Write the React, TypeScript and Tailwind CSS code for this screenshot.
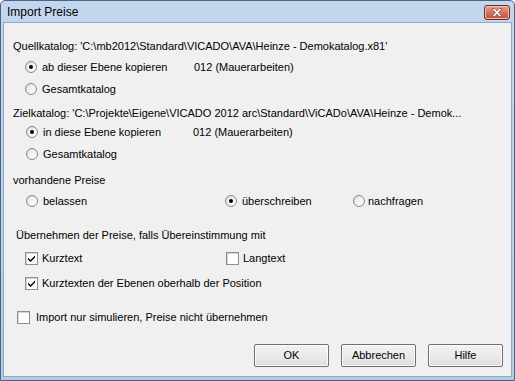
import React from "react";

const font = { fontFamily: '"Liberation Sans", Arial, sans-serif' };

function Radio({ checked }: { checked?: boolean }) {
  return (
    <span className="relative inline-flex h-[12px] w-[12px] shrink-0 items-center justify-center rounded-full border border-[#8a8a8a] bg-gradient-to-br from-[#d8d8d8] to-white">
      <span className="absolute inset-[1px] rounded-full bg-gradient-to-br from-[#e6e6e6] to-white" />
      {checked && <span className="relative h-[4px] w-[4px] rounded-full bg-black" />}
    </span>
  );
}

function Check({ checked }: { checked?: boolean }) {
  return (
    <span className="relative inline-flex h-[13px] w-[13px] shrink-0 items-center justify-center border border-[#8e8f8f] bg-white shadow-[inset_1px_1px_0_#d4d4d4]">
      {checked && (
        <svg width="9" height="9" viewBox="0 0 9 9" className="relative">
          <path d="M1 3.5 L3.5 6 L8 1.5 L8 3.5 L3.5 8 L1 5.5 Z" fill="#000" />
        </svg>
      )}
    </span>
  );
}

function Button({ children }: { children: React.ReactNode }) {
  return (
    <div className="flex h-[23px] w-[75px] items-center justify-center border border-[#707070] rounded-[2px] bg-gradient-to-b from-[#f2f2f2] via-[#ebebeb] to-[#dddddd] shadow-[inset_0_0_0_1px_#fcfcfc] text-[11px] text-black">
      {children}
    </div>
  );
}

export default function App() {
  return (
    <div className="h-[381px] w-[515px] overflow-hidden bg-white" style={font}>
      <div className="flex h-[381px] w-[515px] flex-col border border-[#4b6484] rounded-t-[5px] bg-gradient-to-b from-[#c2d7ee] to-[#b3cbe7]">
        {/* title bar */}
        <div className="flex h-[21px] shrink-0 items-center justify-between pl-[6px] pr-[4px]">
          <span className="text-[12px] text-black">Import Preise</span>
          <div className="mt-[1px] flex h-[15px] w-[26px] items-center justify-center rounded-[3px] border border-[#6b2a22] bg-gradient-to-b from-[#e8a596] via-[#d1735f] to-[#c0503a] shadow-[inset_0_0_0_1px_#f0c0b4]">
            <svg width="12" height="9" viewBox="0 0 12 9">
              <path d="M1 0.5 L4 0.5 L6 3 L8 0.5 L11 0.5 L7.5 4.5 L11 8.5 L8 8.5 L6 6 L4 8.5 L1 8.5 L4.5 4.5 Z" fill="#fff" stroke="#7a3327" strokeWidth="0.6" />
            </svg>
          </div>
        </div>
        {/* body */}
        <div className="mx-[2px] mb-[3px] flex flex-1 flex-col border border-[#8fa9c9] bg-[#f0f0f0] text-[11px] text-black">
          <div className="ml-[9px] mt-[14px] flex h-[18px] items-center">
            Quellkatalog: 'C:\mb2012\Standard\VICADO\AVA\Heinze - Demokatalog.x81'
          </div>
          <div className="ml-[21px] mt-[3px] flex h-[18px] items-center">
            <Radio checked />
            <span className="ml-[5px] w-[152px]">ab dieser Ebene kopieren</span>
            <span>012 (Mauerarbeiten)</span>
          </div>
          <div className="ml-[21px] mt-[4px] flex h-[18px] items-center">
            <Radio />
            <span className="ml-[5px]">Gesamtkatalog</span>
          </div>
          <div className="ml-[9px] mt-[6px] flex h-[18px] items-center whitespace-nowrap">
            Zielkatalog: 'C:\Projekte\Eigene\VICADO 2012 arc\Standard\ViCADo\AVA\Heinze - Demok...
          </div>
          <div className="ml-[22px] mt-[1px] flex h-[18px] items-center">
            <Radio checked />
            <span className="ml-[5px] w-[150px]">in diese Ebene kopieren</span>
            <span>012 (Mauerarbeiten)</span>
          </div>
          <div className="ml-[22px] mt-[4px] flex h-[18px] items-center">
            <Radio />
            <span className="ml-[5px]">Gesamtkatalog</span>
          </div>
          <div className="ml-[9px] mt-[8px] flex h-[18px] items-center">vorhandene Preise</div>
          <div className="ml-[22px] mt-[3px] flex h-[18px] items-center">
            <div className="flex w-[199px] items-center">
              <Radio />
              <span className="ml-[5px]">belassen</span>
            </div>
            <div className="flex w-[128px] items-center">
              <Radio checked />
              <span className="ml-[5px]">überschreiben</span>
            </div>
            <div className="flex items-center">
              <Radio />
              <span className="ml-[3px]">nachfragen</span>
            </div>
          </div>
          <div className="ml-[12px] mt-[16px] flex h-[18px] items-center">
            Übernehmen der Preise, falls Übereinstimmung mit
          </div>
          <div className="ml-[21px] mt-[5px] flex h-[18px] items-center">
            <div className="flex w-[201px] items-center">
              <Check checked />
              <span className="ml-[4px]">Kurztext</span>
            </div>
            <div className="flex items-center">
              <Check />
              <span className="ml-[4px]">Langtext</span>
            </div>
          </div>
          <div className="ml-[21px] mt-[7px] flex h-[18px] items-center">
            <Check checked />
            <span className="ml-[4px]">Kurztexten der Ebenen oberhalb der Position</span>
          </div>
          <div className="ml-[13px] mt-[16px] flex h-[18px] items-center">
            <Check />
            <span className="ml-[6px]">Import nur simulieren, Preise nicht übernehmen</span>
          </div>
          <div className="mr-[8px] mt-[18px] flex justify-end gap-[12px]">
            <Button>OK</Button>
            <Button>Abbrechen</Button>
            <Button>Hilfe</Button>
          </div>
        </div>
      </div>
    </div>
  );
}
